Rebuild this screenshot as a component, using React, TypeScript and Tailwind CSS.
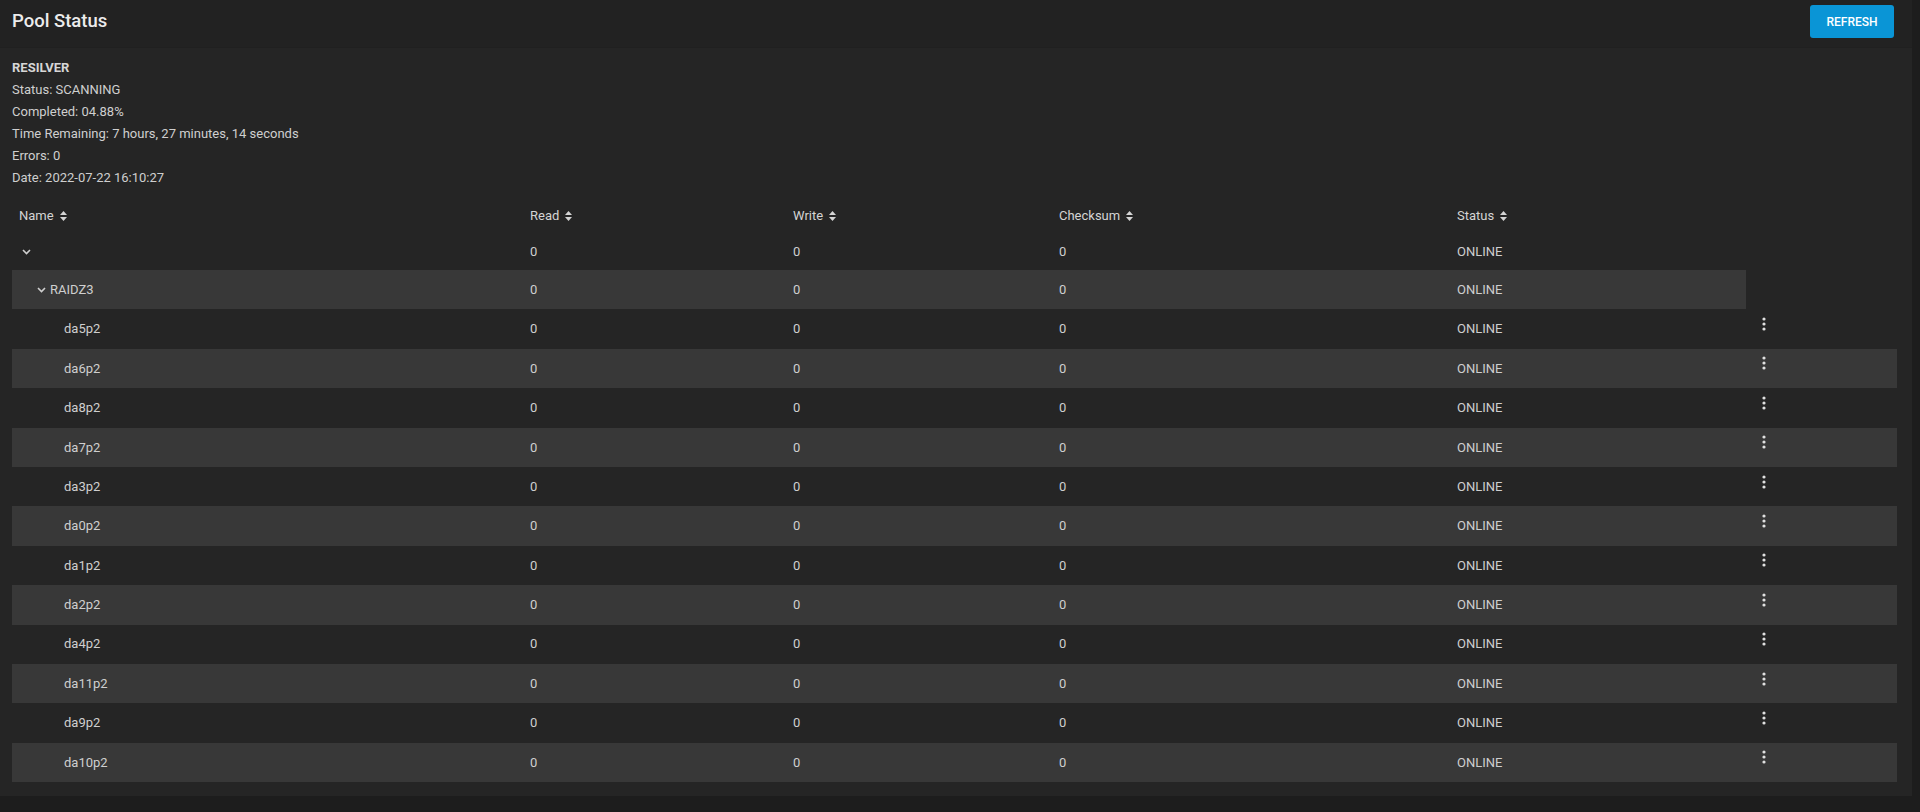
import React from "react";

type Disk = { name: string; level: 0 | 1 | 2; read: number; write: number; checksum: number; status: string };

const rows: Disk[] = [
  { name: "", level: 0, read: 0, write: 0, checksum: 0, status: "ONLINE" },
  { name: "RAIDZ3", level: 1, read: 0, write: 0, checksum: 0, status: "ONLINE" },
  ...["da5p2", "da6p2", "da8p2", "da7p2", "da3p2", "da0p2", "da1p2", "da2p2", "da4p2", "da11p2", "da9p2", "da10p2"].map(
    (name) => ({ name, level: 2 as const, read: 0, write: 0, checksum: 0, status: "ONLINE" })
  ),
];

const resilver = [
  "Status: SCANNING",
  "Completed: 04.88%",
  "Time Remaining: 7 hours, 27 minutes, 14 seconds",
  "Errors: 0",
  "Date: 2022-07-22 16:10:27",
];

const SortIcon = () => (
  <svg width="7" height="10" viewBox="0 0 7 10" className="ml-[6px] inline-block">
    <path d="M3.5 0 L7 4 L0 4 Z" fill="#d4d4d4" />
    <path d="M0 6 L7 6 L3.5 10 Z" fill="#d4d4d4" />
  </svg>
);

const Chevron = () => (
  <svg width="9" height="6" viewBox="0 0 9 6" className="inline-block">
    <path d="M1 1 L4.5 4.5 L8 1" fill="none" stroke="#d0d0d0" strokeWidth="1.6" />
  </svg>
);

const Kebab = () => (
  <svg width="4" height="14" viewBox="0 0 4 14">
    <circle cx="2" cy="2" r="1.6" fill="#e0e0e0" />
    <circle cx="2" cy="7" r="1.6" fill="#e0e0e0" />
    <circle cx="2" cy="12" r="1.6" fill="#e0e0e0" />
  </svg>
);

const cols = "grid grid-cols-[511px_263px_266px_398px_296px_151px]";

export default function App() {
  return (
    <div
      className="min-h-[812px] w-[1920px] bg-[#1d1d1d] text-[13px] text-[#cfcfcf]"
      style={{ fontFamily: "Roboto, 'Liberation Sans', sans-serif" }}
    >
      <div className="w-[1912px] bg-[#252525] pb-[14px]">
        {/* Header */}
        <div className="flex h-[48px] items-center justify-between border-b border-[#202020] bg-[#222222] pl-[12px] pr-[18px]">
          <h1 className="-mt-[4px] text-[18.5px] font-medium text-[#ececec]">Pool Status</h1>
          <button className="-mt-[4px] h-[33px] w-[84px] rounded-[3px] bg-[#0a95d6] text-[12px] font-medium text-white">
            REFRESH
          </button>
        </div>

        {/* Resilver info */}
        <div className="px-[12px] pt-[9px] leading-[22px]">
          <div className="font-bold text-[#d6d6d6]">RESILVER</div>
          {resilver.map((line) => (
            <div key={line}>{line}</div>
          ))}
        </div>

        {/* Vdev table */}
        <div className="ml-[12px] mt-[9px]">
          <div className={`${cols} h-[36px] items-center text-[#d4d4d4]`}>
            <div className="flex items-center pl-[7px]">Name<SortIcon /></div>
            <div className="flex items-center pl-[7px]">Read<SortIcon /></div>
            <div className="flex items-center pl-[7px]">Write<SortIcon /></div>
            <div className="flex items-center pl-[7px]">Checksum<SortIcon /></div>
            <div className="flex items-center pl-[7px]">Status<SortIcon /></div>
            <div />
          </div>
          {rows.map((row, i) => {
            const striped = i === 1 || (i >= 2 && i % 2 === 1);
            const bg = striped ? "bg-[#383838]" : "";
            return (
              <div
                key={row.name || "root"}
                className={`${cols} ${i === 0 ? "h-[36px]" : "h-[39.4px]"} items-center`}
              >
                <div className={`flex h-full items-center ${bg} ${row.level === 0 ? "pl-[10px]" : row.level === 1 ? "pl-[25px]" : "pl-[52px]"}`}>
                  {row.level < 2 && <Chevron />}
                  {row.name && <span className={row.level === 1 ? "ml-[4px]" : ""}>{row.name}</span>}
                </div>
                <div className={`flex h-full items-center pl-[7px] ${bg}`}>{row.read}</div>
                <div className={`flex h-full items-center pl-[7px] ${bg}`}>{row.write}</div>
                <div className={`flex h-full items-center pl-[7px] ${bg}`}>{row.checksum}</div>
                <div className={`flex h-full items-center pl-[7px] ${bg}`}>{row.status}</div>
                {row.level === 2 ? (
                  <div className={`flex h-full items-center pl-[16px] ${bg}`}>
                    <div className="-mt-[10px]"><Kebab /></div>
                  </div>
                ) : (
                  <div />
                )}
              </div>
            );
          })}
        </div>
      </div>
    </div>
  );
}
